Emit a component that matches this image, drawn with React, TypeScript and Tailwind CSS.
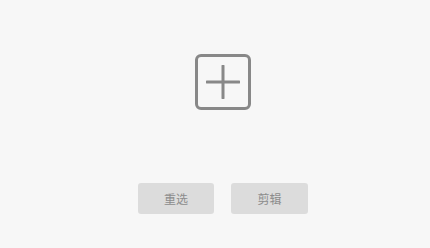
import React from 'react';

const App: React.FC = () => {
  return (
    <div
      className="w-[430px] h-[248px] bg-[#f7f7f7] flex flex-col items-center"
      style={{ fontFamily: '"Noto Sans CJK SC", "Noto Sans", sans-serif' }}
    >
      {/* add box */}
      <div className="mt-[54px] w-[56px] h-[56px] rounded-[6px] border-[3px] border-[#888888] flex items-center justify-center ml-[15px]">
        <svg width="34" height="34" viewBox="0 0 34 34">
          <line x1="1" y1="17" x2="33" y2="17" stroke="#888888" strokeWidth="3" strokeLinecap="round" />
          <line x1="17" y1="1" x2="17" y2="33" stroke="#888888" strokeWidth="3" strokeLinecap="round" />
        </svg>
      </div>

      <div className="mt-[73px] flex gap-[17px] ml-[16px]">
        <button className="w-[76px] h-[31px] rounded-[3px] bg-[#dcdcdc] text-[#8c8c8c] text-[12px] flex items-center justify-center">
          重选
        </button>
        <button className="w-[77px] h-[31px] rounded-[3px] bg-[#dcdcdc] text-[#8c8c8c] text-[12px] flex items-center justify-center">
          剪辑
        </button>
      </div>
    </div>
  );
};

export default App;
